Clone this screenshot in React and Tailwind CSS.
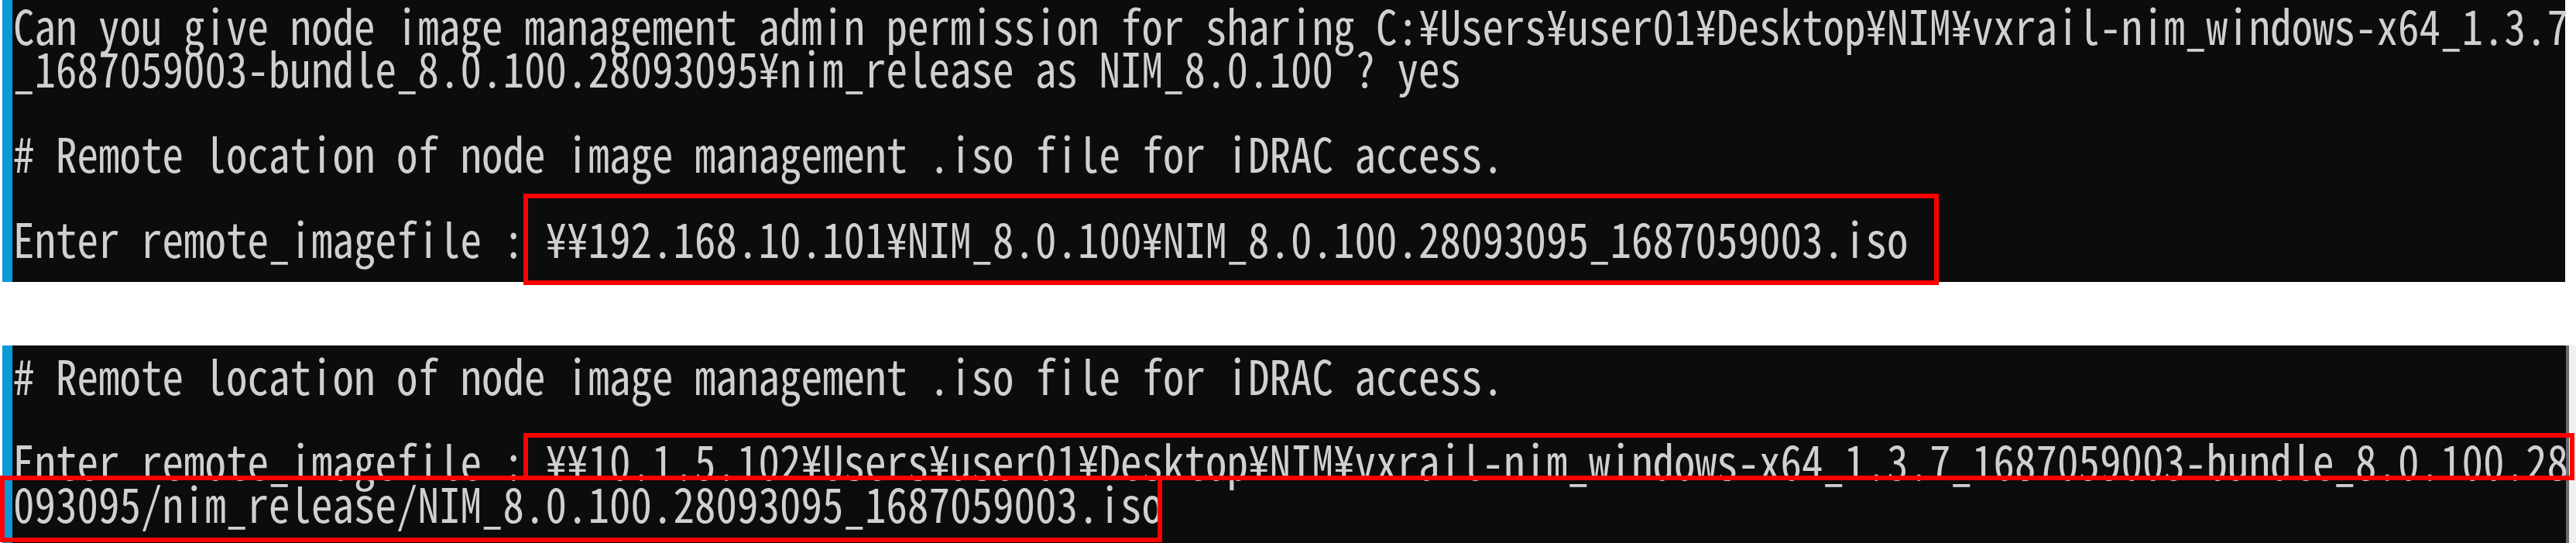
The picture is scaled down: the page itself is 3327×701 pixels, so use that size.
export default function App() {
  const top = [
    "Can you give node image management admin permission for sharing C:¥Users¥user01¥Desktop¥NIM¥vxrail-nim_windows-x64_1.3.7",
    "_1687059003-bundle_8.0.100.28093095¥nim_release as NIM_8.0.100 ? yes",
    "",
    "# Remote location of node image management .iso file for iDRAC access.",
    "",
    "Enter remote_imagefile : ¥¥192.168.10.101¥NIM_8.0.100¥NIM_8.0.100.28093095_1687059003.iso",
  ];
  const bottom = [
    "# Remote location of node image management .iso file for iDRAC access.",
    "",
    "Enter remote_imagefile : ¥¥10.1.5.102¥Users¥user01¥Desktop¥NIM¥vxrail-nim_windows-x64_1.3.7_1687059003-bundle_8.0.100.28",
    "093095/nim_release/NIM_8.0.100.28093095_1687059003.iso",
  ];
  return (
    <div className="w-[3327px] h-[701px] overflow-hidden bg-white font-['Noto_Sans_Mono_CJK_JP','Liberation_Mono',monospace] text-[55px] leading-[55px] text-[#d0d0d0]">
      <div className="relative ml-[3px] w-[3310px] h-[364px] bg-[#0c0c0c] border-l-[13px] border-[#0a9ad8] pl-[1px] pt-[2px]">
        {top.map((l, i) => (
          <div key={i} className="h-[55px] whitespace-pre scale-y-[1.12] origin-[0_11px]">{l}</div>
        ))}
        <div className="absolute left-[660px] top-[250px] w-[1828px] h-[118px] border-[6px] border-[#ff0000]" />
      </div>
      <div className="mt-[82px] flex h-[255px]">
        <div className="relative ml-[3px] w-[3311px] h-[255px] bg-[#0c0c0c] border-l-[13px] border-[#0a9ad8] pl-[1px] pt-[8px]">
          {bottom.map((l, i) => (
            <div key={i} className="h-[55px] whitespace-pre scale-y-[1.12] origin-[0_11px]">{l}</div>
          ))}
          <div className="absolute left-[660px] top-[113px] w-[2649px] h-[61px] border-[6px] border-[#ff0000]" />
          <div className="absolute left-[-16px] top-[168px] w-[1501px] h-[86px] border-[6px] border-[#ff0000]" />
        </div>
        <div className="w-[4px] h-full bg-[#6b6b6b]" />
        <div className="flex-1 h-full bg-[#f0f0f0]" />
      </div>
    </div>
  );
}
